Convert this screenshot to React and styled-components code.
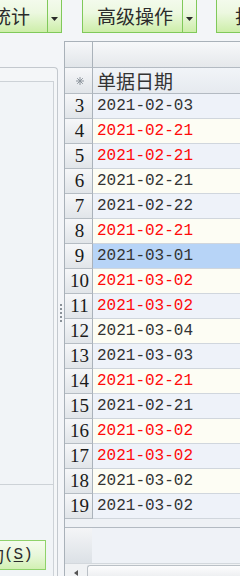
import styled, { createGlobalStyle } from "styled-components"

const GlobalStyle = createGlobalStyle`
  html, body {
    margin: 0;
    padding: 0;
    background: #f3f5f8;
    overflow: hidden;
  }
  body {
    width: 240px;
    height: 576px;
  }
`

const rows = [
  { n: 3, date: "2021-02-03" },
  { n: 4, date: "2021-02-21", red: true },
  { n: 5, date: "2021-02-21", red: true },
  { n: 6, date: "2021-02-21" },
  { n: 7, date: "2021-02-22" },
  { n: 8, date: "2021-02-21", red: true },
  { n: 9, date: "2021-03-01", selected: true },
  { n: 10, date: "2021-03-02", red: true },
  { n: 11, date: "2021-03-02", red: true },
  { n: 12, date: "2021-03-04" },
  { n: 13, date: "2021-03-03" },
  { n: 14, date: "2021-02-21", red: true },
  { n: 15, date: "2021-02-21" },
  { n: 16, date: "2021-03-02", red: true },
  { n: 17, date: "2021-03-02", red: true },
  { n: 18, date: "2021-03-02" },
  { n: 19, date: "2021-03-02" },
]

const App = () => {
  return (
    <>
      <GlobalStyle />
      <Page>
        <Toolbar>
          <SplitButton $offset={-29}>
            <ButtonMain $padLeft={20} $padRight={17}>统计</ButtonMain>
            <ButtonArrow><Caret /></ButtonArrow>
          </SplitButton>
          <SplitButton>
            <ButtonMain $padLeft={14} $padRight={9}>高级操作</ButtonMain>
            <ButtonArrow><Caret /></ButtonArrow>
          </SplitButton>
          <SplitButton $offset={-1}>
            <ButtonMain $padLeft={18} $padRight={10}>打印</ButtonMain>
          </SplitButton>
        </Toolbar>

        <Main>
          <LeftPane>
            <PaneHead />
            <PaneBody>
              <ListArea />
              <ButtonRow>
                <GreenButton>
                  查询<Hotkey>(<u>S</u>)</Hotkey>
                </GreenButton>
              </ButtonRow>
            </PaneBody>
          </LeftPane>

          <Splitter>
            <Grip />
          </Splitter>

          <Grid>
            <Row $kind="head">
              <NumCell $head />
              <Cell />
            </Row>
            <Row $kind="head">
              <NumCell $head>
                <svg width="8" height="8" viewBox="0 0 8 8">
                  <g stroke="#8d959d" strokeWidth="1">
                    <line x1="4" y1="0" x2="4" y2="8" />
                    <line x1="0" y1="4" x2="8" y2="4" />
                    <line x1="1.2" y1="1.2" x2="6.8" y2="6.8" />
                    <line x1="6.8" y1="1.2" x2="1.2" y2="6.8" />
                  </g>
                </svg>
              </NumCell>
              <HeadText>单据日期</HeadText>
            </Row>
            {rows.map((r, i) => (
              <Row key={r.n} $kind={r.selected ? "selected" : i % 2 === 0 ? "odd" : "even"}>
                <NumCell>{r.n}</NumCell>
                <DateCell $red={r.red}>{r.date}</DateCell>
              </Row>
            ))}
            <FooterStrip />
            <EmptyArea>
              <EmptyNum />
            </EmptyArea>
            <HScroll>
              <ScrollArrow />
              <Thumb />
            </HScroll>
          </Grid>
        </Main>
      </Page>
    </>
  )
}

const Caret = () => (
  <svg width="7" height="4" viewBox="0 0 7 4">
    <path d="M0 0 H7 L3.5 4 Z" fill="#2a2a2a" />
  </svg>
)

const Page = styled.div`
  width: 240px;
  height: 576px;
  display: flex;
  flex-direction: column;
  overflow: hidden;
  font-family: "Noto Sans CJK SC", sans-serif;
`

const Toolbar = styled.div`
  height: 41px;
  flex-shrink: 0;
  display: flex;
  align-items: flex-start;
  gap: 20px;
`

const SplitButton = styled.div`
  flex-shrink: 0;
  display: flex;
  height: 37px;
  margin-top: -4px;
  margin-left: ${p => p.$offset || 0}px;
  box-sizing: border-box;
  border: 1px solid #80c95a;
  background: linear-gradient(#f5fbef, #ecf8e0 45%, #cdeea9);
`

const ButtonMain = styled.div`
  display: flex;
  align-items: center;
  padding: 2px ${p => p.$padRight}px 0 ${p => p.$padLeft}px;
  font-size: 19px;
  color: #2b2b2b;
  white-space: nowrap;
  line-height: 1;
`

const ButtonArrow = styled.div`
  width: 13px;
  border-left: 1px solid #80c95a;
  display: flex;
  justify-content: center;
  align-items: center;
  padding-top: 8px;
`

const Main = styled.div`
  flex: 1;
  display: flex;
  min-height: 0;
`

const LeftPane = styled.div`
  flex-shrink: 0;
  width: 58px;
  margin-top: 26px;
  box-sizing: border-box;
  border-top: 1px solid #c3c8ce;
  border-right: 1px solid #c3c8ce;
  border-top-right-radius: 4px;
  background: #f4f6f8;
  display: flex;
  flex-direction: column;
`

const PaneHead = styled.div`
  height: 13px;
  flex-shrink: 0;
`

const PaneBody = styled.div`
  flex: 1;
  width: 54px;
  box-sizing: border-box;
  border-top: 1px solid #cdd2d7;
  border-right: 1px solid #cdd2d7;
  display: flex;
  flex-direction: column;
  background: #f1f4f7;
`

const ListArea = styled.div`
  height: 403px;
  flex-shrink: 0;
  box-sizing: border-box;
  border-bottom: 1px solid #cdd2d7;
  background: #f1f4f7;
`

const ButtonRow = styled.div`
  padding-top: 55px;
  display: flex;
`

const GreenButton = styled.div`
  flex-shrink: 0;
  height: 30px;
  box-sizing: border-box;
  margin-left: -43px;
  padding: 0 12px 0 10px;
  display: flex;
  align-items: center;
  border: 1px solid #8fd26a;
  background: linear-gradient(#f5fbef, #e8f7da 50%, #d2f0b3);
  font-size: 18px;
  color: #2b2b2b;
  white-space: nowrap;
`

const Hotkey = styled.span`
  font-family: "Liberation Mono", monospace;
  font-size: 16px;
  u {
    text-underline-offset: 2px;
  }
`

const Splitter = styled.div`
  flex-shrink: 0;
  width: 6px;
  display: flex;
  justify-content: center;
  align-items: center;
  padding-top: 8px;
`

const Grip = styled.div`
  width: 2px;
  height: 18px;
  margin-left: -1px;
  background: repeating-linear-gradient(to bottom, #8a9198 0 2px, transparent 2px 4px);
`

const rowBg = {
  head: "linear-gradient(#f7f8fa, #e5e8eb)",
  odd: "#eef2f9",
  even: "#fdfdf4",
  selected: "#b7d4f7",
}

const Grid = styled.div`
  flex-shrink: 0;
  width: 220px;
  box-sizing: border-box;
  border-left: 1px solid #a9b1b9;
  border-top: 1px solid #a9b1b9;
  display: flex;
  flex-direction: column;
  background: #eef2f7;
`

const Row = styled.div`
  display: flex;
  height: ${p => (p.$kind === "head" ? 26 : 25)}px;
  flex-shrink: 0;
  box-sizing: border-box;
  border-bottom: 1px solid ${p => (p.$kind === "head" ? "#b3bac2" : "#d0d6dd")};
  background: ${p => rowBg[p.$kind]};
`

const NumCell = styled.div`
  width: 28px;
  flex-shrink: 0;
  box-sizing: border-box;
  margin-bottom: -1px;
  border-right: 1px solid #aab2ba;
  border-bottom: 1px solid #b6bdc4;
  background: linear-gradient(#f6f7f9, #e1e5e9);
  display: flex;
  justify-content: center;
  align-items: center;
  padding-left: 2px;
  font-family: "Liberation Serif", serif;
  font-size: 19px;
  color: #1a1a1a;
`

const Cell = styled.div`
  flex: 1;
`

const HeadText = styled.div`
  flex: 1;
  display: flex;
  align-items: center;
  padding-left: 4px;
  font-size: 19px;
  color: #333;
  background: linear-gradient(#f1f4f8, #e6eaef);
`

const DateCell = styled.div`
  flex: 1;
  display: flex;
  align-items: center;
  padding-left: 4px;
  font-family: "Liberation Mono", monospace;
  font-size: 16px;
  color: ${p => (p.$red ? "#ff0a0a" : "#333333")};
`

const FooterStrip = styled.div`
  height: 9px;
  flex-shrink: 0;
  box-sizing: border-box;
  border-bottom: 1px solid #b3bac2;
  background: #eef1f5;
`

const EmptyArea = styled.div`
  flex: 1;
  display: flex;
  background: #eff2f7;
`

const EmptyNum = styled.div`
  width: 27px;
  background: linear-gradient(#f4f5f7, #dce1e6);
`

const HScroll = styled.div`
  height: 13px;
  flex-shrink: 0;
  box-sizing: border-box;
  border-top: 1px solid #d3d8dd;
  background: #f0f2f4;
  display: flex;
  align-items: flex-end;
`

const ScrollArrow = styled.div`
  width: 22px;
  height: 11px;
  display: flex;
  justify-content: center;
  align-items: center;
  &::before {
    content: "";
    margin-top: 4px;
    border-style: solid;
    border-width: 3px 4px 3px 0;
    border-color: transparent #555 transparent transparent;
  }
`

const Thumb = styled.div`
  flex: 1;
  height: 11px;
  box-sizing: border-box;
  border: 1px solid #bac0c6;
  border-bottom: none;
  border-right: none;
  border-top-left-radius: 3px;
  background: linear-gradient(#fdfdfe, #eef0f2);
`

export default App
